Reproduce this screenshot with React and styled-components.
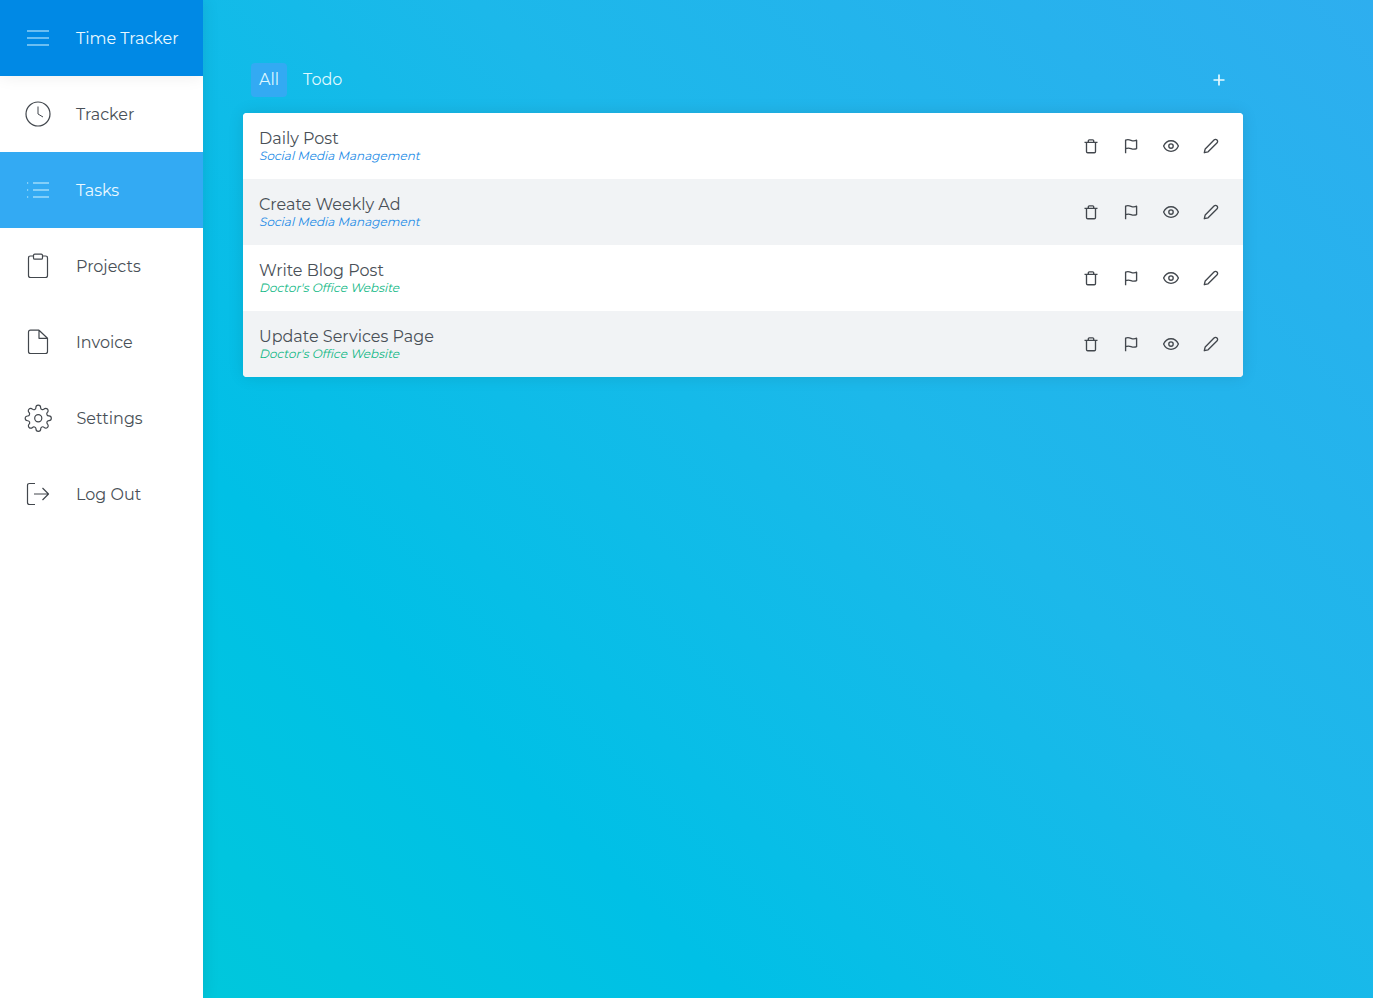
import React from 'react';
import styled, { createGlobalStyle } from 'styled-components';
import { FiSettings } from 'react-icons/fi';

const GlobalStyle = createGlobalStyle`
  * { box-sizing: border-box; }
  body {
    margin: 0;
    font-family: Montserrat, Inter, sans-serif;
    font-size: 16px;
    color: #495057;
  }
`;

const Page = styled.div`
  display: flex;
  height: 100vh;
  min-height: 998px;
  overflow: hidden;
  background: linear-gradient(45deg, #00cad8 0%, #00c0e6 31%, #1cb8ea 62%, #2eaeef 100%);
`;

const Sidebar = styled.nav`
  display: flex;
  flex-direction: column;
  flex: 0 0 203px;
  background: #fff;
  box-shadow: 0 0 16px rgba(0, 0, 0, 0.1);
`;

const NavItem = styled.a`
  display: flex;
  align-items: center;
  height: 76px;
  padding-left: 24px;
  gap: 24px;
  white-space: nowrap;
  color: ${(p) => (p.$active ? '#e9f8ff' : '#495057')};
  background: ${(p) => (p.$active ? '#33aaf3' : 'transparent')};
`;

const Brand = styled(NavItem)`
  color: #e9f8ff;
  background: #0089e5;
  box-shadow: 0 0 16px rgba(0, 0, 0, 0.08);
  clip-path: inset(0 0 -20px 0);
`;

const NavIcon = styled.span`
  display: flex;
  align-items: center;
  justify-content: center;
  flex: 0 0 28px;
  height: 28px;
  color: ${(p) => (p.$light ? '#d3f4ff' : '#42474d')};

  svg { flex: none; }
`;

const Label = styled.span`
  line-height: 20px;
`;

const NavLabel = styled(Label)`
  padding-top: 2px;
`;

const TaskName = styled.span`
  line-height: 18px;
`;

const Main = styled.main`
  display: flex;
  flex-direction: column;
  width: 1080px;
  padding: 62px 40px 0;
`;

const Toolbar = styled.div`
  display: flex;
  align-items: center;
  height: 35px;
  padding: 0 16px 0 8px;
  margin-bottom: 16px;
  color: #dff8ff;
`;

const Tab = styled.button`
  height: 34px;
  padding: 0 8px;
  margin-right: 8px;
  border: 0;
  border-radius: 4px;
  font: inherit;
  color: #dff8ff;
  background: ${(p) => (p.$active ? '#33aaf3' : 'transparent')};
`;

const AddButton = styled.button`
  display: flex;
  margin-left: auto;
  padding: 0;
  border: 0;
  color: #e6faff;
  background: none;
`;

const TaskList = styled.ul`
  margin: 0;
  padding: 0;
  list-style: none;
  border-radius: 4px;
  overflow: hidden;
  background: #fff;
  box-shadow: 0 0 16px rgba(0, 0, 0, 0.1);
`;

const TaskRow = styled.li`
  display: flex;
  align-items: center;
  justify-content: space-between;
  height: 66px;
  padding: 0 23px 0 16px;
  background: #fff;

  &:nth-child(even) { background: #f1f3f5; }
`;

const TaskText = styled.div`
  display: flex;
  flex-direction: column;
  align-items: flex-start;
  white-space: nowrap;
`;

const Project = styled.span`
  font-size: 12px;
  line-height: 15px;
  transform: skewX(-14deg);
  transform-origin: 0 12px;
  color: ${(p) => p.$color};
`;

const Actions = styled.div`
  display: flex;
  gap: 22px;
  color: #42474d;

  svg { display: block; }
`;

const Glyph = ({ size = 28, width = 1.2, children }) => (
  <svg
    width={size}
    height={size}
    viewBox={`0 0 ${size} ${size}`}
    fill="none"
    stroke="currentColor"
    strokeWidth={width}
    strokeLinejoin="round"
  >
    {children}
  </svg>
);

const MenuIcon = () => (
  <Glyph><path d="M3 7H25M3 14H25M3 21H25" /></Glyph>
);
const ClockIcon = () => (
  <Glyph>
    <circle cx="14" cy="14" r="12" />
    <path d="M14 6.5V14L19 17" strokeWidth="1" />
  </Glyph>
);
const ListIcon = () => (
  <Glyph>
    <path d="M9 7H25M9 14H25M9 21H25M3 7H4.2M3 14H4.2M3 21H4.2" />
  </Glyph>
);
const ClipboardIcon = () => (
  <Glyph>
    <path d="M9.5 4H6.5Q4.5 4 4.5 6V23.5Q4.5 25.5 6.5 25.5H21.5Q23.5 25.5 23.5 23.5V6Q23.5 4 21.5 4H18.5" />
    <rect x="9.5" y="2.2" width="9" height="5" rx="1.3" />
  </Glyph>
);
const FileIcon = () => (
  <Glyph>
    <path d="M15 2.2H6.5Q4.5 2.2 4.5 4.2V23.5Q4.5 25.5 6.5 25.5H21.5Q23.5 25.5 23.5 23.5V10.3L15 2.2V10.3H23.5" />
  </Glyph>
);
const LogoutIcon = () => (
  <Glyph>
    <path d="M11 3.5H5.5Q3.5 3.5 3.5 5.5V22.5Q3.5 24.5 5.5 24.5H11" />
    <path d="M10 14H24.5M18.5 8L24.5 14L18.5 20" />
  </Glyph>
);
const GearIcon = () => <FiSettings size={28.5} strokeWidth={1} />;

const TrashIcon = () => (
  <Glyph size={18} width={1.35}>
    <path d="M2.5 5.4H15.5M6.3 5.4V3.8Q6.3 2.8 7.3 2.8H10.7Q11.7 2.8 11.7 3.8V5.4M4.5 5.4V14.5Q4.5 15.7 5.7 15.7H12.3Q13.5 15.7 13.5 14.5V5.4" />
  </Glyph>
);
const FlagIcon = () => (
  <Glyph size={18} width={1.35}>
    <path d="M3.6 16.2V3.2C5.5 2.2 7.2 2.6 9 3.3C11 4.1 13 4 14.6 3.2V11.6C13 12.3 11 12.3 9 11.6C7.2 11 5.5 10.9 3.6 11.7" />
  </Glyph>
);
const EyeIcon = () => (
  <Glyph size={18} width={1.35}>
    <path d="M1.6 9C3.1 5.6 5.8 3.7 9 3.7S14.9 5.6 16.4 9C14.9 12.4 12.2 14.3 9 14.3S3.1 12.4 1.6 9Z" />
    <circle cx="9" cy="9" r="2.2" />
  </Glyph>
);
const PencilIcon = () => (
  <Glyph size={18} width={1.35}>
    <path d="M2.3 15.7L3.2 11.9L12 3.1C12.9 2.2 14.1 2.1 15 3S15.8 5.1 14.9 6L6.1 14.8Z" />
  </Glyph>
);
const PlusIcon = () => (
  <Glyph size={16} width={1.7}><path d="M8 2.5V13.5M2.5 8H13.5" /></Glyph>
);

const navItems = [
  { label: 'Tracker', icon: ClockIcon },
  { label: 'Tasks', icon: ListIcon, active: true },
  { label: 'Projects', icon: ClipboardIcon },
  { label: 'Invoice', icon: FileIcon },
  { label: 'Settings', icon: GearIcon },
  { label: 'Log Out', icon: LogoutIcon },
];

const tasks = [
  { name: 'Daily Post', project: 'Social Media Management', color: '#228be6' },
  { name: 'Create Weekly Ad', project: 'Social Media Management', color: '#228be6' },
  { name: 'Write Blog Post', project: "Doctor's Office Website", color: '#12b886' },
  { name: 'Update Services Page', project: "Doctor's Office Website", color: '#12b886' },
];

export default function App() {
  return (
    <>
      <GlobalStyle />
      <Page>
        <Sidebar>
          <Brand>
            <NavIcon $light><MenuIcon /></NavIcon>
            <NavLabel>Time Tracker</NavLabel>
          </Brand>
          {navItems.map(({ label, icon: Icon, active }) => (
            <NavItem key={label} $active={active}>
              <NavIcon $light={active}><Icon /></NavIcon>
              <NavLabel>{label}</NavLabel>
            </NavItem>
          ))}
        </Sidebar>
        <Main>
          <Toolbar>
            <Tab $active><Label>All</Label></Tab>
            <Tab><Label>Todo</Label></Tab>
            <AddButton aria-label="Add task"><PlusIcon /></AddButton>
          </Toolbar>
          <TaskList>
            {tasks.map((task) => (
              <TaskRow key={task.name}>
                <TaskText>
                  <TaskName>{task.name}</TaskName>
                  <Project $color={task.color}>{task.project}</Project>
                </TaskText>
                <Actions>
                  <TrashIcon />
                  <FlagIcon />
                  <EyeIcon />
                  <PencilIcon />
                </Actions>
              </TaskRow>
            ))}
          </TaskList>
        </Main>
      </Page>
    </>
  );
}
